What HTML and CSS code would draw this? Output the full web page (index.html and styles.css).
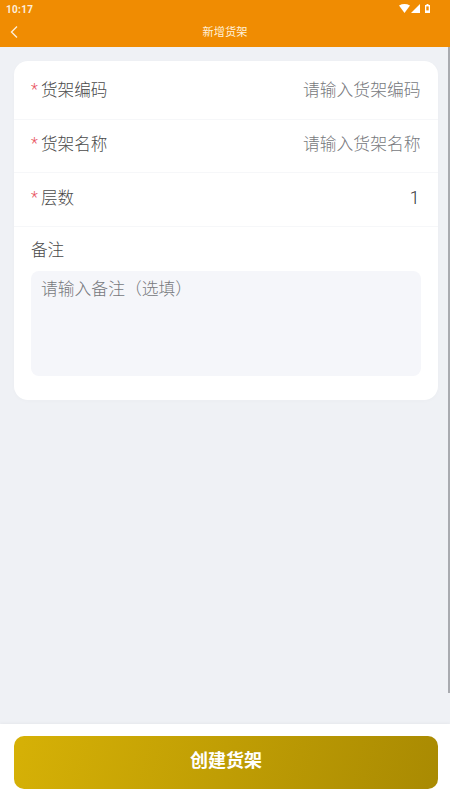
FILE: index.html
```html
<!DOCTYPE html>
<html lang="zh">
<head>
<meta charset="utf-8">
<title>新增货架</title>
<link rel="stylesheet" href="styles.css">
</head>
<body>
<div class="app">
  <header class="header">
    <div class="status">
      <span class="time">10:17</span>
      <span class="status-icons">
        <svg width="11" height="9" viewBox="0 0 11 9"><path d="M0 1.4Q5.5-1.4 11 1.4L5.5 9Z" fill="#fff"/></svg>
        <svg width="9" height="9" viewBox="0 0 9 9"><path d="M9 0V9H0Z" fill="#fff"/></svg>
        <svg class="battery" width="5" height="9" viewBox="0 0 5 9"><path d="M1.5 0H3.5V1H5V9H0V1H1.5Z" fill="#fff"/><rect x="1.3" y="2.4" width="2.4" height="4" fill="#f28c00"/></svg>
      </span>
    </div>
    <div class="nav">
      <svg class="back" width="10" height="14" viewBox="0 0 10 14"><path d="M8 1.5L2.5 7L8 12.5" fill="none" stroke="#fff" stroke-opacity=".85" stroke-width="1.4"/></svg>
      <span class="title">新增货架</span>
    </div>
  </header>
  <main class="content">
    <section class="card">
      <div class="row r1"><span class="label"><i>*</i>货架编码</span><span class="ph">请输入货架编码</span></div>
      <div class="row r2"><span class="label"><i>*</i>货架名称</span><span class="ph">请输入货架名称</span></div>
      <div class="row r3"><span class="label"><i>*</i>层数</span><span class="val">1</span></div>
      <div class="note">
        <div class="note-label">备注</div>
        <div class="textarea">请输入备注（选填）</div>
      </div>
    </section>
    <div class="scrollbar"></div>
  </main>
  <footer class="footer">
    <button class="submit">创建货架</button>
  </footer>
</div>
</body>
</html>
```
FILE: styles.css
```css
* { box-sizing: border-box; }
html, body { margin: 0; padding: 0; }
body { font-family: "Roboto", "Noto Sans CJK SC", sans-serif; background: #eff1f5; }
.app { width: 450px; height: 800px; display: flex; flex-direction: column; overflow: hidden; }
.header { height: 47px; background: #f08c02; color: #fff; flex: none; }
.status { height: 16px; padding: 1px 20px 0 6px; display: flex; justify-content: space-between; align-items: center; }
.time { font-size: 10px; font-weight: 700; color: #fdeedb; letter-spacing: .3px; padding-top: 1px; }
.status-icons { display: flex; align-items: center; gap: 1px; }
.battery { margin-left: 4px; }
.nav { height: 31px; position: relative; display: flex; align-items: center; justify-content: center; }
.back { position: absolute; left: 9px; top: 9px; }
.title { font-size: 11.2px; color: #fff0d8; position: relative; top: -1px; }
.content { flex: 1; position: relative; padding: 14px 12px 0 14px; }
.scrollbar { position: absolute; right: 0; top: 0; width: 2px; height: 646px; background: #a9abb0; }
.card { background: #fff; border-radius: 14px; height: 339px; box-shadow: 0 1px 4px rgba(0,0,0,.02); }
.row { display: flex; justify-content: space-between; align-items: center; padding: 0 17.5px 0 17px; border-bottom: 1px solid #f6f7f9; font-size: 16.8px; font-weight: 300; }
.r1 { height: 59px; padding-bottom: 3px; }
.r2 { height: 53px; padding-bottom: 7px; }
.r3 { height: 54px; padding-bottom: 6px; }
.label { color: #4a4a4a; display: flex; align-items: center; font-size: 16.6px; }
.label i { color: #e8525d; font-style: normal; width: 10px; font-size: 16px; position: relative; top: 1px; }
.ph { color: #77797d; }
.val { color: #333; padding-right: 1px; font-size: 17.5px; position: relative; top: 1px; }
.note { padding: 13px 17px 0; }
.note-label { font-size: 16.6px; font-weight: 300; color: #4a4a4a; line-height: 22px; }
.textarea { margin-top: 9px; height: 105px; background: #f5f6fa; border-radius: 8px; padding: 7px 10px; font-size: 16.8px; font-weight: 300; line-height: 22px; color: #77797d; }
.footer { height: 76px; flex: none; background: #fff; padding: 12px 12px 0 14px; box-shadow: 0 -1px 3px rgba(0,0,0,.04); position: relative; }
.submit { display: block; width: 424px; height: 53px; border: 0; border-radius: 10px; background: linear-gradient(105deg, #d6b106, #a98a02); color: #fff; font-family: inherit; font-size: 18px; font-weight: 700; padding: 0 0 8px; }
```
